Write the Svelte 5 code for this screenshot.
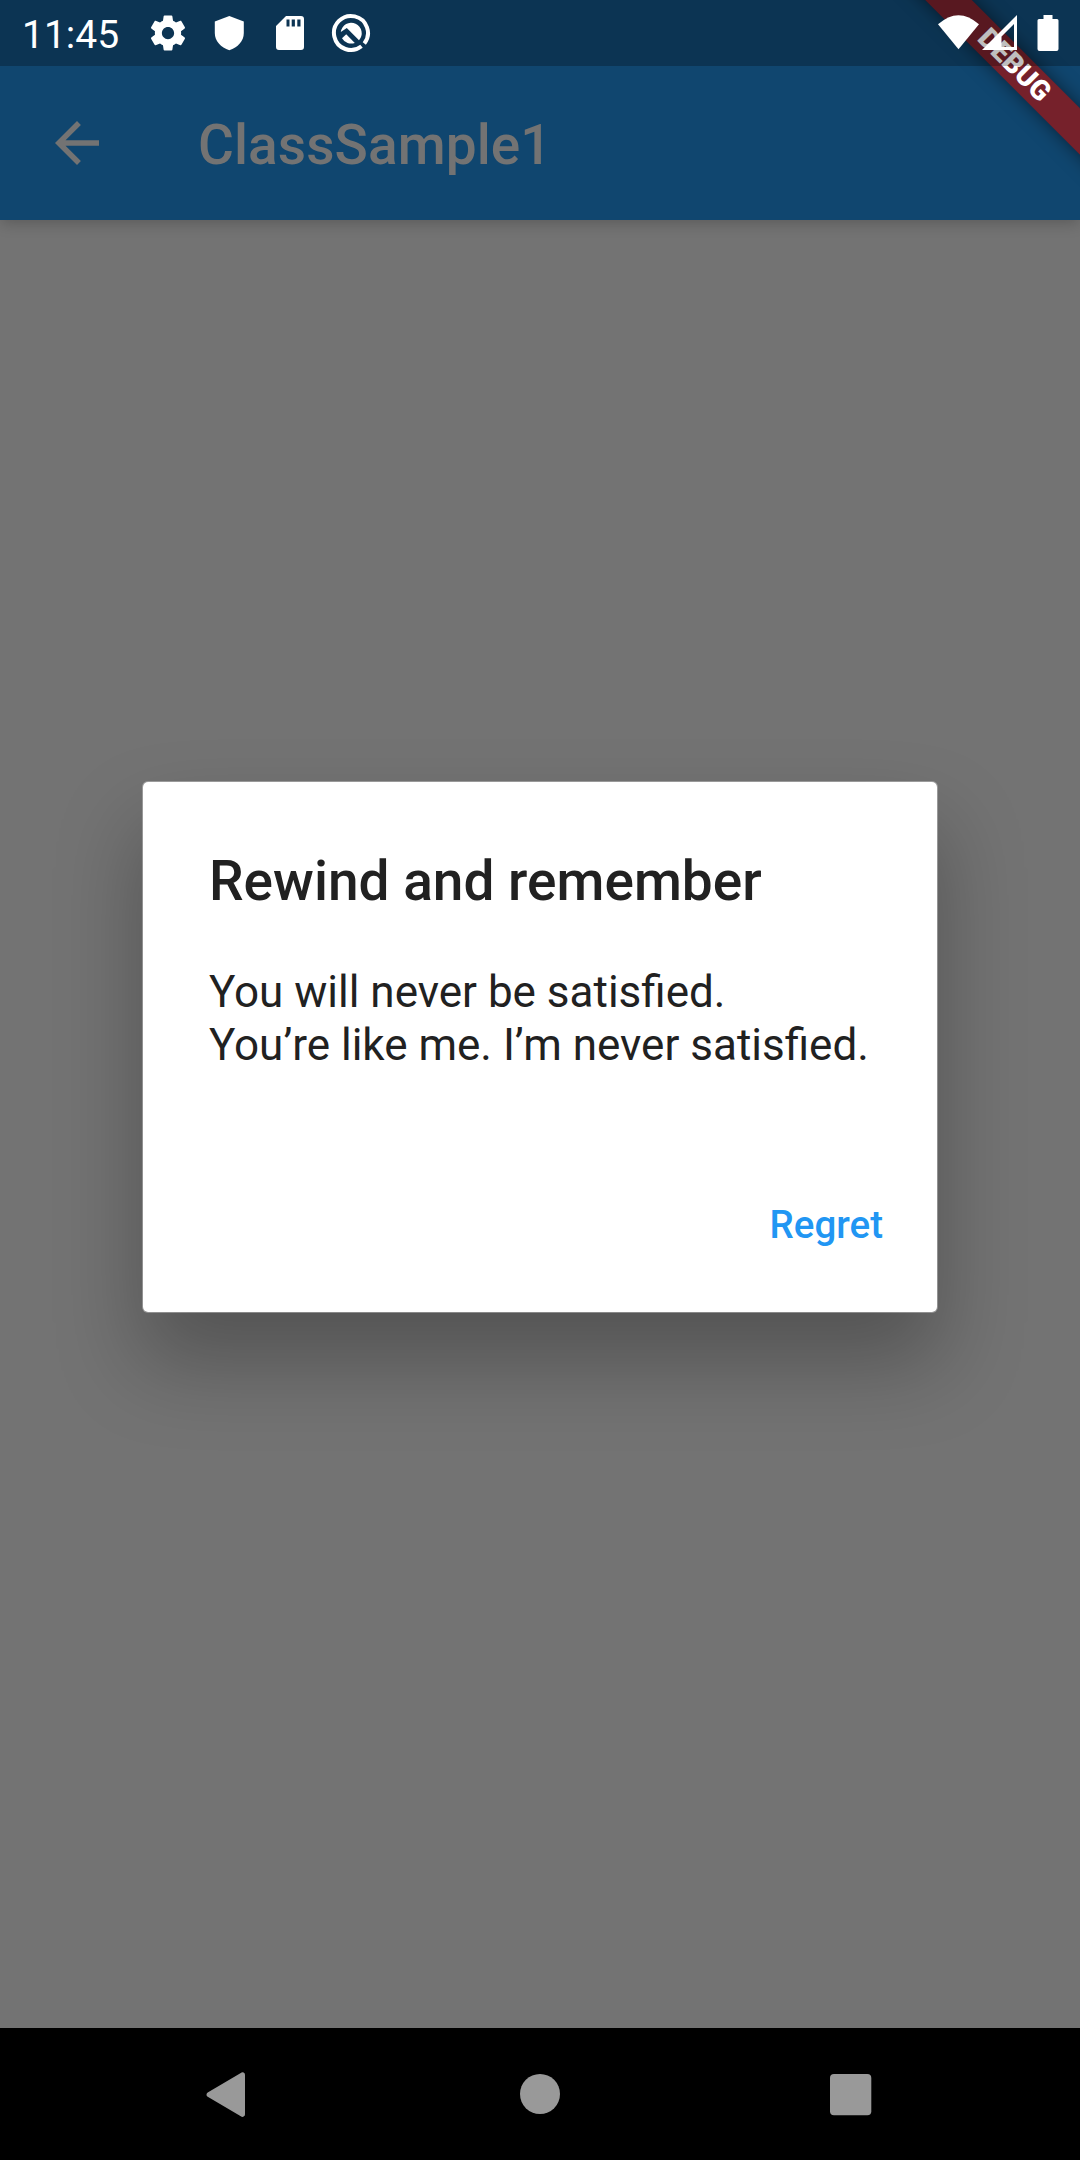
<script lang="ts">
  const title = 'ClassSample1';
  const lines = ['You will never be satisfied.', 'You’re like me. I’m never satisfied.'];
</script>

<div class="screen">
  <header class="top">
    <div class="statusbar">
      <span class="clock">11:45</span>
      <svg class="gear" viewBox="0 0 24 24"><path d="M19.43 12.98c.04-.32.07-.64.07-.98s-.03-.66-.07-.98l2.11-1.65c.19-.15.24-.42.12-.64l-2-3.46c-.12-.22-.39-.3-.61-.22l-2.49 1c-.52-.4-1.08-.73-1.69-.98l-.38-2.65C14.46 2.18 14.25 2 14 2h-4c-.25 0-.46.18-.49.42l-.38 2.65c-.61.25-1.17.59-1.69.98l-2.49-1c-.23-.09-.49 0-.61.22l-2 3.46c-.13.22-.07.49.12.64l2.11 1.65c-.04.32-.07.65-.07.98s.03.66.07.98l-2.11 1.65c-.19.15-.24.42-.12.64l2 3.46c.12.22.39.3.61.22l2.49-1c.52.4 1.08.73 1.69.98l.38 2.65c.03.24.24.42.49.42h4c.25 0 .46-.18.49-.42l.38-2.65c.61-.25 1.17-.59 1.69-.98l2.49 1c.23.09.49 0 .61-.22l2-3.46c.12-.22.07-.49-.12-.64zM12 15.5c-1.930 0-3.500-1.570-3.500-3.500s1.570-3.500 3.500-3.500 3.500 1.570 3.500 3.500-1.570 3.500-3.500 3.500z" /></svg>
      <svg class="shield" viewBox="0 0 42 42"><path d="M21.300 4 35.800 9.500v11.500c0 8-6 14.500-14.500 17.300C12.800 35.500 6.800 29 6.800 21V9.500z" /></svg>
      <svg class="sdcard" viewBox="0 0 42 42"><path fill-rule="evenodd" d="M17 4h15a3 3 0 0 1 3 3v28a3 3 0 0 1-3 3H10a3 3 0 0 1-3-3V14zM17.500 7.500v7h3v-7zm5.200 0v7h3.200v-7zm5.600 0v7h3.200v-7z" /></svg>
      <svg class="beta" viewBox="0 0 42 42">
        <path d="M31.500 34.300A17 17 0 1 1 34.300 31.500" fill="none" stroke="#fff" stroke-width="4" />
        <path d="M10.800 20A10.500 10.500 0 1 1 29 28.300L16.800 16z" />
        <path d="M16.200 22.300 12 26.300A10.500 10.500 0 0 0 24.800 30.900z" />
      </svg>
      <div class="indicators">
        <svg class="wifi" viewBox="0 0 42 36"><path d="M1 9.300Q21.500-9 42 9.300L21.500 34.200z" /></svg>
        <svg class="signal" viewBox="0 0 36 36"><path fill-rule="evenodd" d="M36 0v35H1zM33 9 20.500 21.500V32H33z" /></svg>
        <svg class="battery" viewBox="0 0 22 36"><path d="M6.500 0h9v4H20a1.500 1.500 0 0 1 1.500 1.500V34a2 2 0 0 1-2 2H2.500a2 2 0 0 1-2-2V5.500A1.500 1.500 0 0 1 2 4h4.500z" /></svg>
      </div>
    </div>
    <div class="appbar">
      <svg class="back" viewBox="0 0 24 24"><path d="M20 11H7.830l5.590-5.590L12 4l-8 8 8 8 1.410-1.410L7.830 13H20v-2z" /></svg>
      <h1>{title}</h1>
    </div>
    <div class="ribbon-area"><div class="ribbon">DEBUG</div></div>
    <div class="status-tint"></div>
  </header>

  <main>
    <section class="dialog">
      <h2>Rewind and remember</h2>
      <div class="message">
        {#each lines as line}<p>{line}</p>{/each}
      </div>
      <button>Regret</button>
    </section>
  </main>

  <nav>
    <svg viewBox="0 0 66 66"><path d="M48 14V53a2.500 2.500 0 0 1-4.200 2.200L10.700 35.800a2.500 2.500 0 0 1 0-4.300L43.800 11.900A2.500 2.500 0 0 1 48 14z" /></svg>
    <svg viewBox="0 0 66 66"><circle cx="33" cy="33" r="20" /></svg>
    <svg viewBox="0 0 66 66"><rect x="13" y="13" width="41.300" height="41.300" rx="4" /></svg>
  </nav>
</div>

<style>
  :global(body) {
    margin: 0;
  }
  .screen {
    width: 1080px;
    height: 2160px;
    display: flex;
    flex-direction: column;
    overflow: hidden;
    background: #737373;
    font-family: Roboto, sans-serif;
  }
  h1, h2, p {
    margin: 0;
    white-space: nowrap;
  }
  svg {
    flex: none;
  }
  .top {
    position: relative;
    height: 220px;
    background: #10466f;
    box-shadow: 0 4px 14px -1px rgba(0, 0, 0, 0.22);
  }
  .statusbar {
    position: relative;
    z-index: 3;
    height: 66px;
    display: flex;
    align-items: center;
    box-sizing: border-box;
    padding: 0 21px 0 22px;
    fill: #fff;
    color: #fff;
  }
  .clock {
    width: 100px;
    margin-right: 25px;
    font-size: 39px;
    line-height: 66px;
    padding-top: 3px;
  }
  .gear {
    width: 42px;
    height: 42px;
  }
  .shield, .sdcard, .beta {
    width: 42px;
    height: 42px;
    margin-left: 19px;
  }
  .indicators {
    display: flex;
    margin-left: auto;
    align-items: center;
  }
  .wifi {
    width: 42px;
    height: 36px;
    margin-right: 2px;
  }
  .signal {
    width: 36px;
    height: 36px;
    margin-right: 20px;
  }
  .battery {
    width: 22px;
    height: 36px;
  }
  .status-tint {
    position: absolute;
    z-index: 2;
    top: 0;
    left: 0;
    width: 100%;
    height: 66px;
    background: rgba(0, 0, 0, 0.25);
  }
  .appbar {
    height: 154px;
    display: flex;
    align-items: center;
    padding-left: 44px;
  }
  .back {
    width: 66px;
    height: 66px;
    fill: #737373;
  }
  h1 {
    margin-left: 88px;
    padding-top: 3px;
    font-size: 55px;
    font-weight: 500;
    color: #737373;
    letter-spacing: 0.08px;
  }
  .ribbon-area {
    position: absolute;
    z-index: 1;
    top: 0;
    right: 0;
    width: 240px;
    height: 220px;
    overflow: hidden;
  }
  .ribbon {
    position: absolute;
    top: 49px;
    left: -26.500px;
    width: 400px;
    height: 33px;
    line-height: 32px;
    text-align: center;
    font-size: 28px;
    font-weight: 900;
    color: #fff;
    background: #76212b;
    box-shadow: 0 0 18px rgba(0, 0, 0, 0.5);
    transform: rotate(45deg);
  }
  main {
    flex: 1;
    display: flex;
    justify-content: center;
    align-items: flex-start;
    padding-top: 561px;
    box-sizing: border-box;
  }
  .dialog {
    display: flex;
    flex-direction: column;
    box-sizing: border-box;
    width: 796px;
    height: 532px;
    padding: 66px 54px 0 66px;
    border: 1px solid rgba(255, 255, 255, 0.3);
    border-radius: 6px;
    background: #fff;
    background-clip: padding-box;
    color: #212121;
    box-shadow: 0 48px 84px 2px rgba(0, 0, 0, 0.27);
  }
  h2 {
    font-size: 55px;
    line-height: 66px;
    font-weight: 500;
  }
  .message {
    margin-top: 52px;
    font-size: 44px;
    line-height: 53px;
  }
  button {
    align-self: flex-end;
    margin-top: 120px;
    padding: 0;
    border: 0;
    background: none;
    color: #2196f3;
    font: 500 38.500px/66px Roboto, sans-serif;
  }
  nav {
    height: 132px;
    display: flex;
    justify-content: center;
    align-items: center;
    gap: 244px;
    background: #000;
    fill: #999;
  }
  nav svg {
    width: 66px;
    height: 66px;
  }
</style>
